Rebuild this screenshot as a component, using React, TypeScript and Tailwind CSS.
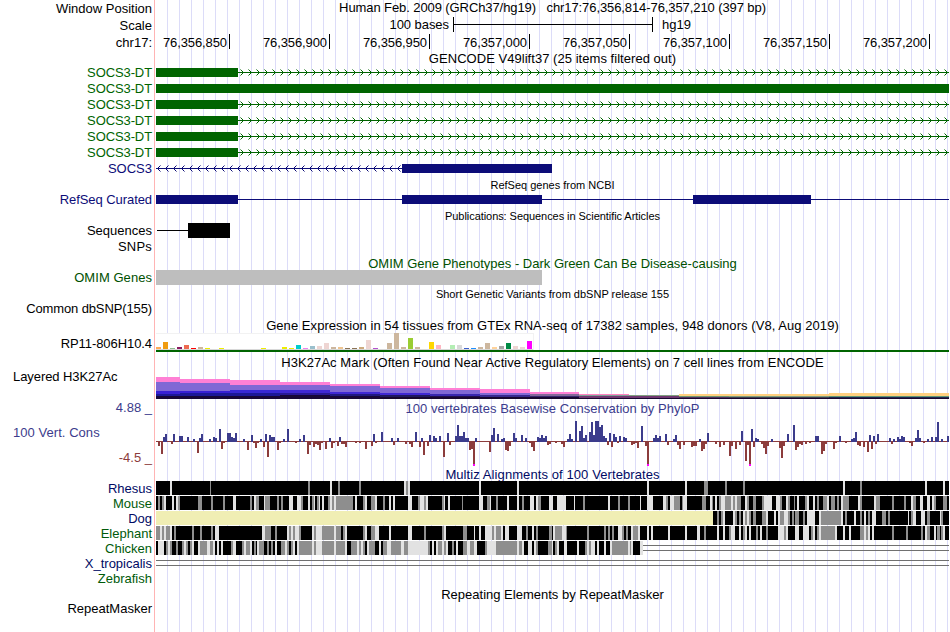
import React from 'react';

const GREEN = '#006400';
const NAVY = '#0c0c78';

// x positions below are image pixels, the data area begins at 156
const X0 = 156;
const WIDTH = 793;

const labels = [
  { text: 'Window Position', style: 'h-[17px]' },
  { text: 'Scale', style: 'h-[17px]' },
  { text: 'chr17:', style: 'h-[30px]' },
  { text: 'SOCS3-DT', style: 'h-4 tracking-[-0.1px] text-[#006400]' },
  { text: 'SOCS3-DT', style: 'h-4 tracking-[-0.1px] text-[#006400]' },
  { text: 'SOCS3-DT', style: 'h-4 tracking-[-0.1px] text-[#006400]' },
  { text: 'SOCS3-DT', style: 'h-4 tracking-[-0.1px] text-[#006400]' },
  { text: 'SOCS3-DT', style: 'h-4 tracking-[-0.1px] text-[#006400]' },
  { text: 'SOCS3-DT', style: 'h-4 tracking-[-0.1px] text-[#006400]' },
  { text: 'SOCS3', style: 'h-[31px] text-[#0c0c78]' },
  { text: 'RefSeq Curated', style: 'h-[31px] tracking-[-0.07px] text-[#0c0c78]' },
  { text: 'Sequences', style: 'h-4' },
  { text: 'SNPs', style: 'h-[31px] tracking-[0.2px]' },
  { text: 'OMIM Genes', style: 'h-[31px] tracking-[0.05px] text-[#005000]' },
  { text: 'Common dbSNP(155)', style: 'h-[35px] tracking-[-0.12px]' },
  { text: 'RP11-806H10.4', style: 'h-[33px] tracking-[-0.07px]' },
  { text: 'Layered H3K27Ac', style: 'h-[31px] self-start pl-[13px] tracking-[-0.07px]' },
  { text: '4.88 _', style: 'h-[25px] text-[#3c3c8c]' },
  { text: '100 Vert. Cons', style: 'h-[25px] self-start pl-[13px] tracking-[0.05px] text-[#3c3c8c]' },
  { text: '-4.5 _', style: 'h-[31px] text-[#8c3c3c]' },
  { text: 'Rhesus', style: 'h-[15px] text-[#000a64]' },
  { text: 'Mouse', style: 'h-[15px] text-[#005a0a]' },
  { text: 'Dog', style: 'h-[15px] text-[#000a64]' },
  { text: 'Elephant', style: 'h-[15px] text-[#005a0a]' },
  { text: 'Chicken', style: 'h-[15px] text-[#005a0a]' },
  { text: 'X_tropicalis', style: 'h-[15px] text-[#000a64]' },
  { text: 'Zebrafish', style: 'h-[30px] text-[#005a0a]' },
  { text: 'RepeatMasker', style: 'h-4' },
];

const positions = ['76,356,850', '76,356,900', '76,356,950', '76,357,000', '76,357,050', '76,357,100', '76,357,150', '76,357,200'];

// [slot, height, color], one slot per tissue
const tissues: [number, number, string][] = [
  [0, 2, '#ffaa56'], [1, 7, '#f09c10'], [2, 1, '#8fbc8f'], [3, 2, '#8b1c62'], [4, 4, '#ee6a50'],
  [5, 1, '#ff0000'], [6, 2, '#cdb79e'], [7, 1, '#eeee00'], [9, 1, '#eeee00'], [15, 1, '#eeee00'],
  [18, 2, '#eeee00'], [19, 1, '#eeee00'], [20, 4, '#00cdcd'], [21, 1, '#ee82ee'], [22, 3, '#9ac0cd'],
  [23, 3, '#eed5d2'], [24, 6, '#eed5d2'], [25, 2, '#cdb79e'], [26, 2, '#eec591'], [27, 1, '#8b7355'],
  [28, 1, '#8b7355'], [29, 2, '#cdaa7d'], [30, 9, '#eed5d2'], [31, 1, '#b452cd'], [33, 6, '#cdb79e'],
  [34, 16, '#cdb79e'], [35, 2, '#cdb79e'], [36, 11, '#9acd32'], [37, 2, '#cdb79e'], [39, 7, '#ffd700'],
  [40, 4, '#ffb6c1'], [42, 4, '#b4eeb4'], [43, 4, '#d9d9d9'], [44, 1, '#3a5fcd'], [45, 1, '#1e90ff'],
  [46, 2, '#cdb79e'], [47, 6, '#cdb79e'], [48, 2, '#ffd39b'], [49, 3, '#a6a6a6'], [50, 6, '#008b45'],
  [51, 3, '#eed5d2'], [52, 2, '#eed5d2'], [53, 8, '#ff00ff'],
];

// stacked bands of every 50px step: [start, end, [top, color]...]
const layers: [number, number, [number, string][]][] = [
  [156, 180, [[6, '#ff80d5'], [11, '#8068d5'], [20, '#3820d5'], [23, '#1c1898'], [25, '#180838']]],
  [180, 230, [[8, '#ff80d5'], [12, '#8068d5'], [20, '#3820d5'], [22, '#1c1898'], [25, '#180838']]],
  [230, 280, [[9, '#ff80d5'], [14, '#8068d5'], [19, '#3828d5'], [22, '#1c1898'], [25, '#180838']]],
  [280, 330, [[11, '#ff80d5'], [14, '#8068d5'], [19, '#4028d5'], [22, '#281898'], [24, '#180838']]],
  [330, 380, [[13, '#ff80d5'], [15, '#8068d5'], [21, '#4028d5'], [23, '#201880'], [25, '#180838']]],
  [380, 430, [[15, '#ff80d5'], [17, '#8068d5'], [22, '#4028d5'], [24, '#201860'], [26, '#180830']]],
  [430, 480, [[17, '#ff80d5'], [19, '#8068d5'], [23, '#3828b0'], [25, '#201050'], [26, '#180830']]],
  [480, 530, [[18, '#ff80d5'], [22, '#8068d5'], [24, '#382890'], [26, '#180830']]],
  [530, 579, [[21, '#ff80d5'], [23, '#806898'], [25, '#382870'], [26, '#180830']]],
  [579, 629, [[23, '#ff80c0'], [24, '#80a098'], [25, '#703870'], [27, '#180830']]],
  [629, 679, [[24, '#80a080'], [25, '#703870'], [27, '#180830']]],
  [679, 729, [[23, '#ffd080'], [25, '#709870'], [26, '#503060'], [27, '#180830']]],
  [729, 829, [[23, '#ffd080'], [25, '#80a080'], [26, '#404050'], [27, '#180830']]],
  [829, 949, [[22, '#ffd080'], [25, '#609878'], [26, '#202850'], [27, '#180830']]],
];

// conservation scores, x:height with negative values below the axis
const scores =
  '158:-5 161:-13 163:4 165:7 171:-3 173:7 179:5 181:5 187:4 193:2 197:-12 199:3 201:7 209:2 213:4 215:3 219:12 221:-8 223:-2 227:8 229:8 231:4 233:3 235:8 243:2 247:-9 251:6 253:-2 255:-7 257:-2 260:2 263:-6 265:7 267:-16 269:6 271:4 273:4 277:-9 279:-2 283:2 287:12 295:-2 299:2 303:6 307:-13 309:-4 313:-6 315:-3 317:-4 ' +
  '319:-9 321:-2 325:-8 329:3 331:-7 333:-2 337:-5 339:4 341:-3 343:-3 345:-6 355:-2 359:-2 365:-8 371:-5 373:7 375:-2 381:9 391:3 393:-4 397:3 405:-3 409:-3 411:-6 415:9 419:-6 421:3 423:-14 427:-5 429:6 433:5 435:3 439:5 443:-16 447:8 449:-4 455:5 457:16 459:5 461:5 463:9 465:3 467:3 469:-9 471:-8 473:-25 475:3 ' +
  '489:-11 491:6 493:13 497:7 501:2 503:3 505:-9 507:-10 509:-5 513:8 515:3 521:6 525:3 529:-2 531:-6 533:-10 537:4 539:3 541:6 543:3 545:5 547:-4 549:-3 555:-2 561:-3 563:-6 567:2 569:7 571:2 575:20 579:10 581:15 583:3 585:6 589:9 591:19 593:6 595:20 597:20 599:14 601:16 603:5 605:3 607:-4 609:8 611:-6 613:7 615:4 617:-2 619:5 623:4 625:3 ' +
  '631:-4 633:-3 635:-2 637:-7 641:15 645:-5 647:-25 653:3 655:6 657:3 659:5 665:7 667:-4 673:2 675:6 677:-4 679:-8 683:-4 691:-6 693:-5 695:-5 699:2 701:-10 703:-8 705:-3 707:8 715:-3 719:-6 723:-4 729:-15 731:-5 735:-8 739:-4 741:10 745:-20 747:-4 749:-25 751:12 753:-6 755:3 757:2 761:-3 763:-7 765:-13 767:-5 771:2 779:-7 781:-17 783:-5 787:7 793:16 795:-9 797:-6 799:-3 801:-4 805:-3 809:-2 ' +
  '815:5 817:5 821:-13 823:-10 825:-3 833:-8 835:-2 839:5 845:-2 851:2 853:3 855:9 857:-4 859:-5 863:-6 867:-11 869:6 871:-8 873:5 875:-3 877:7 889:3 891:-3 893:2 897:4 899:2 901:5 903:4 909:-2 911:-5 915:3 917:11 919:3 923:-2 927:2 931:4 935:4 937:19 941:2 947:5';

// alignment rows are black where conserved; L and G are light and gray blocks as x, shade, width
const rhesus = '170L2 210G1 308G2 330L2 338G2 359G2 404L2 406G2 408L2 479L2 517L2 647L2 685L2 704G4 725G2 743G2 843L2 860G2 925L2 943L2';
const mouse =
  '158G2 162G2 164L2 172L2 176L2 178G2 198G4 211G2 223G2 233L3 250G2 254L2 256G3 264L1 265G5 277G2 281G2 289L4 297L4 301G2 308L2 312G2 314L1 317G2 319L1 322L2 328G2 330L2 332G2 334L2 336G17 355L2 363G2 365L2 371G4 375L2 383G2 389L2 393L2 408L4 418G2 420L4 424G2 426L2 442G2 444L1 448L2 462G1 479L4 487G3 490L1 496G2 507L2 517L2 522G2 530L4 536L2 538G3 549L4 557L9 574L1 583G2 608L2 618G2 628G2 640L1 647L6 663L3 666G2 670L4 674G6 682G1 ' +
  '683L4 702G4 710L2 712G1 715L2 719G2 721L4 725G6 731L2 733G2 735L2 737G4 745L2 747G2 753G3 762G2 764L8 776L4 780G2 786L2 788G2 794G1 797L2 805G2 807L2 813L2 817G2 823G4 827L2 831G4 837G2 841L2 843G2 845G4 858L2 860G2 874L2 876G4 892G2 904G2 911L2 913G3 920L3 927L3 932L2 934G2 943G4';
const dog =
  '717G2 721G2 723L2 733L2 735G2 739G2 743L2 745G2 747L2 749G2 753G3 762G4 766L2 774L2 778L2 780G4 784L4 788G2 792G2 795G4 803G2 807L8 819L2 821G20 841L2 845G2 854L2 860G2 864L2 868G2 872L4 882G4 888G2 908L1 911G2 913L3 921L4 927G3 940L1 941G2';
const elephant =
  '156G4 160L2 162G2 164L2 166G4 170L2 174G2 192G2 200G2 211G2 215L4 262L3 265G6 275G2 287L2 289G2 291L2 293G2 295L4 299G2 312L2 314G2 316L6 322G12 334L2 336G5 343G2 345L2 363G2 365L2 371G4 375L4 389L2 408L4 424G2 442G2 444L2 463G4 474L1 479L2 485L7 492G2 494L2 496G5 501L2 505L4 517L5 526G2 532L2 536G2 549G3 553L2 555G7 562L4 566G1 587G2 604G2 608G2 612G2 618L4 622G2 626G2 631L2 633G5 638L2 647L2 651L2 668L2 685L2 ' +
  '697L3 704G2 717L2 723L2 729G2 731L4 739L2 743G2 745L2 749L2 756G2 760L2 766G2 778L6 784G2 786L2 795L4 803L6 811G2 813L2 817G2 819L2 821G14 835L2 843L2 849L2 860G4 864L2 866G2 868L2 872L2 892G2 906G2 921G2 925L2 927G3 934L2 937G3 941G2 943L2';
const chicken =
  '158L6 166G2 168L2 170G2 176G2 182G2 184L2 186G2 190G2 192L2 198L2 200G7 207L3 210G3 213L2 217L2 221L2 231G2 233L3 242G2 244L2 246G4 250L2 254G2 257L2 259G5 267G2 271G2 275L2 281G4 285L2 287G2 291G2 293L2 297L2 299G13 312L2 314G2 316L6 322G12 334L2 336G9 345L2 351G6 357L2 359G2 361L2 363G2 367L2 369G6 379L2 383G4 387L4 391G10 401L3 404G4 408L20 428G2 432L2 436L2 438G4 442L2 444G2 446L2 452G2 456L2 463G4 467L3 470G4 474L3 485G2 487L9 496G21 517L2 519G3 522L2 528L4 534L2 536G2 548G4 552L1 555G2 557L2 564L3 577L2 585G2 587L2 589G2 591L4 597L2 604L2 610L2 612G16 628L2 630G1 631L2 640L3';

const Title: React.FC<{ className: string; children: React.ReactNode }> = ({ className, children }) => (
  <div className={`text-center whitespace-pre ${className}`}>{children}</div>
);

const Track: React.FC<{ height: number; children?: React.ReactNode }> = ({ height, children }) => (
  <svg
    className="block shrink-0"
    width={WIDTH}
    height={height}
    viewBox={`${X0} 0 ${WIDTH} ${height}`}
    shapeRendering="crispEdges"
  >
    {children}
  </svg>
);

const Arrows: React.FC<{ from: number; to: number; left?: boolean; color: string }> = ({ from, to, left, color }) => {
  const tips: number[] = [];
  for (let x = from; x < to; x += 8) tips.push(x);
  const dir = left ? 1 : -1;
  return (
    <>
      {tips.map(x => (
        <g key={x} fill={color}>
          <rect x={x + dir} y={7} width={1} height={1} />
          <rect x={x + dir} y={9} width={1} height={1} />
          <rect x={x + dir * 2} y={6} width={1} height={1} />
          <rect x={x + dir * 2} y={10} width={1} height={1} />
          <rect x={x + dir * 3} y={5} width={1} height={1} opacity={0.5} />
          <rect x={x + dir * 3} y={11} width={1} height={1} opacity={0.5} />
        </g>
      ))}
    </>
  );
};

const Transcript: React.FC<{ full?: boolean }> = ({ full }) => (
  <Track height={16}>
    <rect x={156} y={4} width={full ? WIDTH : 82} height={9} fill={GREEN} />
    {!full && <rect x={238} y={8} width={711} height={1} fill={GREEN} />}
    {!full && <Arrows from={243} to={949} color={GREEN} />}
  </Track>
);

const Alignment: React.FC<{ blocks: string; from?: number; to?: number }> = ({ blocks, from = 156, to = 949 }) => (
  <Track height={15}>
    {from > 156 && <rect x={156} y={0} width={from - 156} height={14} fill="#f0eeb4" />}
    <rect x={from} y={0} width={to - from} height={14} fill="#000" />
    {blocks.split(' ').map(block => {
      const [x, w] = block.split(/[LG]/).map(Number);
      return <rect key={block} x={x} y={0} width={w} height={14} fill={block.includes('L') ? '#e2e2e2' : '#8e8e8e'} />;
    })}
    {to < 949 && <rect x={to} y={4} width={949 - to} height={1} fill="#707070" />}
    {to < 949 && <rect x={to} y={9} width={949 - to} height={1} fill="#707070" />}
  </Track>
);

const Conservation: React.FC = () => (
  <Track height={50}>
    <rect x={156} y={24} width={WIDTH} height={1} fill="#8c3c3c" />
    {scores.split(' ').map(score => {
      const [x, h] = score.split(':').map(Number);
      return (
        <g key={score}>
          <rect x={x} y={h > 0 ? 24 - h : 24} width={2} height={Math.abs(h)} fill={h > 0 ? '#3c3c8c' : '#8c3c3c'} />
          {h > 0 && <rect x={x} y={24} width={2} height={1} fill="#3c3c8c" />}
          {h === -25 && <rect x={x} y={47} width={2} height={2} fill="#ff00ff" />}
        </g>
      );
    })}
  </Track>
);

export default function App() {
  return (
    <div className="flex h-[632px] w-[950px] overflow-hidden bg-white font-['Liberation_Sans',Arial,sans-serif] text-[13px] leading-4 text-black">
      <div className="flex w-[154px] shrink-0 flex-col items-end pt-px pr-[2px]">
        {labels.map((label, i) => (
          <div key={i} className={`shrink-0 whitespace-pre ${label.style}`}>{label.text}</div>
        ))}
      </div>
      <div className="mr-px w-px shrink-0 bg-[#ffb4b4]" />

      <div className="flex w-[793px] shrink-0 flex-col bg-[linear-gradient(to_right,transparent_11px,#dcdcf8_11px)] bg-[length:12px_100%]">
        <Title className="h-[17px] tracking-[-0.09px]">{'Human Feb. 2009 (GRCh37/hg19)   chr17:76,356,814-76,357,210 (397 bp)'}</Title>
        <div className="flex h-[17px]">
          <div className="w-[297px] pr-[4px] text-right tracking-[-0.05px]">100 bases</div>
          <div className="flex h-[15px] w-[200px] items-center border-x border-black">
            <div className="h-px w-full bg-black" />
          </div>
          <div className="pl-[9px]">hg19</div>
        </div>
        <div className="flex h-[17px]">
          {positions.map((position, i) => (
            <div
              key={position}
              className={`h-[15px] shrink-0 border-r border-black pt-px pr-[2px] text-right tracking-[-0.1px] ${i === 0 ? 'w-[74px]' : 'w-[100px]'}`}
            >
              {position}
            </div>
          ))}
        </div>

        <Title className="h-[13px] tracking-[0.04px]">GENCODE V49lift37 (25 items filtered out)</Title>
        <Transcript />
        <Transcript full />
        <Transcript />
        <Transcript />
        <Transcript />
        <Transcript />
        <Track height={16}>
          <rect x={156} y={8} width={250} height={1} fill={NAVY} />
          <Arrows from={157} to={400} left color={NAVY} />
          <rect x={402} y={4} width={150} height={9} fill={NAVY} />
        </Track>

        <Title className="h-[15px] pt-px text-[11px]">RefSeq genes from NCBI</Title>
        <Track height={16}>
          <rect x={156} y={8} width={WIDTH} height={1} fill={NAVY} />
          <rect x={156} y={4} width={82} height={9} fill={NAVY} />
          <rect x={402} y={4} width={140} height={9} fill={NAVY} />
          <rect x={693} y={4} width={118} height={9} fill={NAVY} />
        </Track>

        <Title className="h-4 pt-px text-[11px] tracking-[-0.06px]">Publications: Sequences in Scientific Articles</Title>
        <Track height={33}>
          <rect x={157} y={7} width={31} height={1} fill="#000" />
          <rect x={188} y={0} width={42} height={15} fill="#000" />
        </Track>

        <Title className="h-[14px] text-[#005000]">OMIM Gene Phenotypes - Dark Green Can Be Disease-causing</Title>
        <Track height={15}>
          <rect x={156} y={0} width={386} height={15} fill="#bebebe" />
        </Track>

        <Title className="h-8 pt-px text-[11px]">Short Genetic Variants from dbSNP release 155</Title>

        <Title className="h-4 pt-px tracking-[0.06px]">Gene Expression in 54 tissues from GTEx RNA-seq of 17382 samples, 948 donors (V8, Aug 2019)</Title>
        <Track height={19}>
          <rect x={156} y={0} width={378} height={17} fill="#f2f2f2" />
          <rect x={156} y={1} width={377} height={15} fill="#fff" />
          <rect x={156} y={16} width={377} height={1} fill="#d8d8d8" />
          {tissues.map(([slot, h, color]) => (
            <rect key={slot} x={X0 + slot * 7} y={16 - h} width={5} height={h} fill={color} />
          ))}
          <rect x={156} y={17} width={WIDTH} height={2} fill={GREEN} />
        </Track>

        <Title className="h-[19px] pt-[3px] tracking-[0.055px]">H3K27Ac Mark (Often Found Near Active Regulatory Elements) on 7 cell lines from ENCODE</Title>
        <Track height={28}>
          {layers.map(([start, end, bands]) =>
            bands.map(([top, color]) => (
              <rect key={`${start}-${top}`} x={start} y={top} width={end - start} height={28 - top} fill={color} />
            ))
          )}
        </Track>

        <Title className="h-[18px] pt-[2px] tracking-[0.04px] text-[#3c3c8c]">100 vertebrates Basewise Conservation by PhyloP</Title>
        <Conservation />

        <Title className="h-[14px] tracking-[0.09px] text-[#000a64]">Multiz Alignments of 100 Vertebrates</Title>
        <Alignment blocks={rhesus} />
        <Alignment blocks={mouse} />
        <Alignment blocks={dog} from={713} />
        <Alignment blocks={elephant} />
        <Alignment blocks={chicken} to={643} />
        <Track height={31}>
          <rect x={156} y={4} width={WIDTH} height={1} fill="#707070" />
          <rect x={156} y={9} width={WIDTH} height={1} fill="#707070" />
        </Track>

        <Title className="h-11">Repeating Elements by RepeatMasker</Title>
      </div>
    </div>
  );
}
